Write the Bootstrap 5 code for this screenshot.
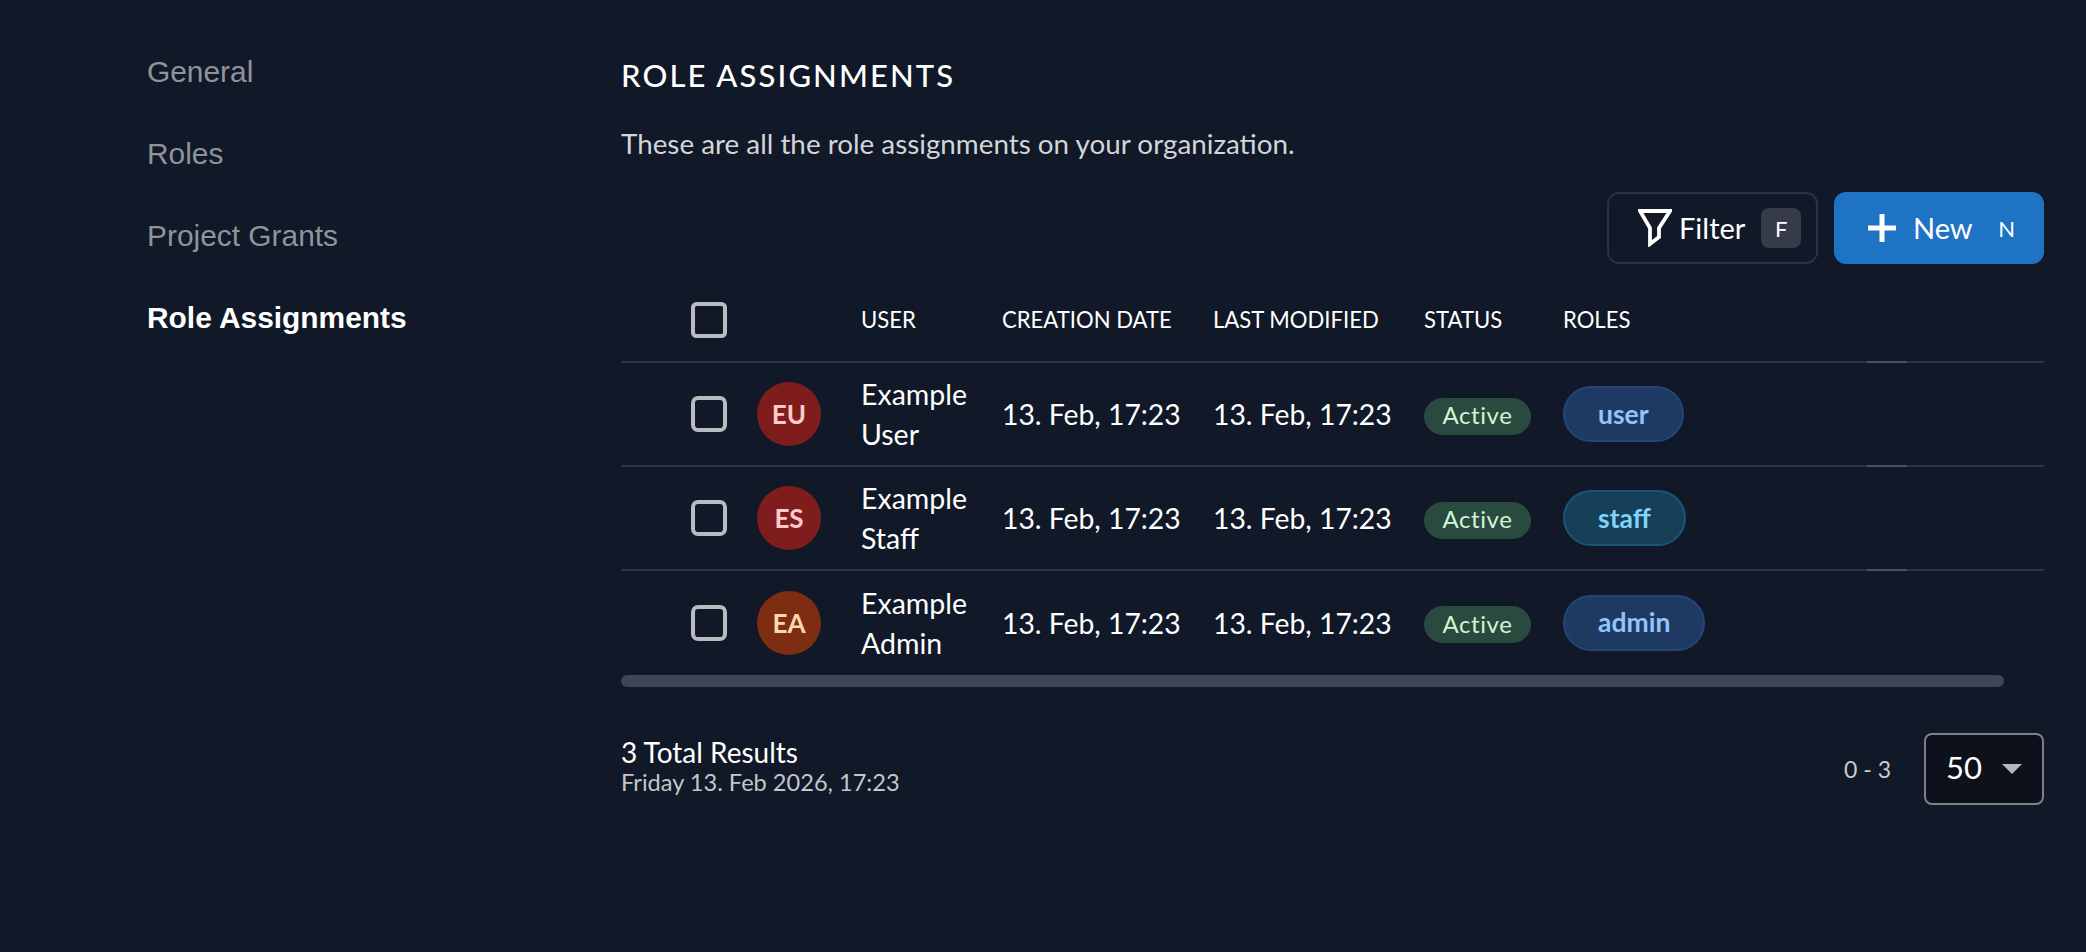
<!DOCTYPE html>
<html lang="en">
<head>
  <meta charset="UTF-8">
  <title>Role Assignments</title>
  <meta name="viewport" content="width=device-width, initial-scale=1">
  <link href="https://cdn.jsdelivr.net/npm/bootstrap@5.3.3/dist/css/bootstrap.min.css" rel="stylesheet">
  <style>
    body {
      background-color: #111827;
      color: #fff;
      font-family: Lato, "Liberation Sans", sans-serif;
    }
    .page-wrap {
      padding: 0 42px 0 147px;
      min-height: 952px;
    }
    .side-menu {
      width: 474px;
      flex: none;
      padding-top: 52px;
    }
    .side-menu .nav-link {
      font-family: "Liberation Sans", Arial, sans-serif;
      font-size: 29.9px;
      line-height: 40px;
      padding: 0;
      margin-bottom: 42px;
      color: #8f939b;
    }
    .side-menu .nav-link.active {
      color: #fff;
      font-weight: 700;
    }
    .main-area {
      flex: 1;
      min-width: 0;
      padding-top: 55px;
    }
    .page-title {
      font-family: Lato, sans-serif;
      font-size: 31px;
      line-height: 40px;
      font-weight: 500;
      letter-spacing: 2.1px;
      margin: 0 0 29px;
    }
    .page-desc {
      font-size: 27.8px;
      line-height: 40px;
      color: #d3d5d9;
      margin: 0 0 28px;
    }
    .tool-btn {
      height: 72px;
      border-radius: 12px;
      font-size: 29px;
      color: #fff;
      padding: 0;
    }
    .filter-btn {
      width: 211px;
      border: 2px solid #2b3140;
      padding-left: 29px;
    }
    .new-btn {
      width: 210px;
      background-color: #1f73c4;
      border: 0;
      padding-left: 33px;
    }
    .filter-btn:hover, .new-btn:hover {
      color: #fff;
    }
    .new-btn:hover {
      background-color: #1f73c4;
    }
    .filter-label {
      margin-left: 7px;
    }
    .key-box {
      width: 40px;
      height: 40px;
      border-radius: 8px;
      background-color: #363b49;
      font-size: 22px;
    }
    .key-plain {
      width: 40px;
      font-size: 22px;
      margin-left: 14px;
    }
    .roles-table {
      --bs-table-bg: transparent;
      --bs-table-color: #fff;
      table-layout: fixed;
      width: 100%;
      margin: 15px 0 0;
    }
    .roles-table th, .roles-table td {
      padding: 0;
      vertical-align: middle;
      border-bottom: 2px solid #2c3342;
    }
    .roles-table th {
      height: 83px;
      font-size: 22.1px;
      font-weight: 400;
      white-space: nowrap;
    }
    .roles-table td {
      height: 104px;
      font-size: 28.5px;
      line-height: 40px;
    }
    .roles-table td.date-cell {
      font-size: 28.3px;
      white-space: nowrap;
    }
    .roles-table tbody tr:last-child td {
      border-bottom: 0;
    }
    .roles-table .grip-cell {
      border-bottom-color: #4a4f5b;
    }
    .roles-table tbody tr:last-child .grip-cell {
      border-bottom: 0;
    }
    .row-check {
      width: 36px;
      height: 36px;
      margin: 0 0 0 70px;
      display: block;
      background-color: transparent;
      border: 4px solid #b9bbbf;
      border-radius: 4px;
    }
    .user-avatar {
      width: 64px;
      height: 64px;
      font-size: 26px;
      font-weight: 700;
    }
    .avatar-red {
      background-color: #7f1d1d;
      color: #fecaca;
    }
    .avatar-orange {
      background-color: #7c2d12;
      color: #fed7aa;
    }
    .state-pill {
      width: 107px;
      height: 37px;
      background-color: #2a4a40;
      color: #d1f5d3;
      font-size: 24px;
      font-weight: 400;
      letter-spacing: .6px;
      padding: 0 0 2px;
    }
    .role-pill {
      height: 56px;
      padding: 0 33px;
      border: 2px solid;
      font-size: 26.5px;
      font-weight: 700;
    }
    .role-blue {
      background-color: #1e3a63;
      border-color: #23457c;
      color: #93c5fd;
    }
    .role-sky {
      background-color: #164058;
      border-color: #1b5478;
      color: #7dd3fc;
    }
    .scroll-bar {
      width: 1383px;
      height: 12px;
      margin-top: 1px;
      border-radius: 6px;
      background-color: #3c4656;
    }
    .foot-row {
      margin-top: 46px;
    }
    .total-box {
      margin-bottom: 6px;
    }
    .total-line {
      font-size: 28px;
      line-height: 32px;
    }
    .date-line {
      font-size: 23.6px;
      line-height: 28px;
      color: #c3c6cb;
    }
    .range-text {
      font-size: 23px;
      color: #c9cbcf;
      margin-right: 33px;
    }
    .size-btn {
      width: 120px;
      height: 72px;
      padding: 0 0 4px 20px;
      background-color: #0d111b;
      border: 2px solid #7d8087;
      border-radius: 8px;
      color: #fff;
      font-size: 31px;
    }
    .size-btn:hover {
      background-color: #0d111b;
      color: #fff;
      border-color: #7d8087;
    }
    .size-btn::after {
      border-top: 10px solid #b5b7bb;
      border-left: 10px solid transparent;
      border-right: 10px solid transparent;
      border-bottom: 0;
      margin: 4px 0 0 20px;
      vertical-align: middle;
    }
  </style>
</head>
<body>

<div class="page-wrap d-flex">
  <nav class="side-menu nav flex-column">
    <a class="nav-link" href="#">General</a>
    <a class="nav-link" href="#">Roles</a>
    <a class="nav-link" href="#">Project Grants</a>
    <a class="nav-link active" href="#">Role Assignments</a>
  </nav>

  <main class="main-area">
    <h1 class="page-title">ROLE ASSIGNMENTS</h1>
    <p class="page-desc">These are all the role assignments on your organization.</p>

    <div class="d-flex justify-content-end gap-3">
      <button type="button" class="btn tool-btn filter-btn d-flex align-items-center">
        <svg width="34" height="38" viewBox="0 0 34 38" fill="none" stroke="#fff" stroke-width="3.8">
          <path d="M2 2h30L21 19v9l-9 7V19z"/>
        </svg>
        <span class="filter-label">Filter</span>
        <span class="key-box d-flex align-items-center justify-content-center ms-3">F</span>
      </button>
      <button type="button" class="btn tool-btn new-btn d-flex align-items-center">
        <svg width="30" height="30" viewBox="0 0 30 30" stroke="#fff" stroke-width="5">
          <path d="M15 1v28M1 15h28"/>
        </svg>
        <span class="ms-3">New</span>
        <span class="key-plain text-center">N</span>
      </button>
    </div>

    <table class="table roles-table">
      <colgroup>
        <col style="width:136px">
        <col style="width:104px">
        <col style="width:141px">
        <col style="width:211px">
        <col style="width:211px">
        <col style="width:139px">
        <col style="width:304px">
        <col style="width:40px">
        <col>
      </colgroup>
      <thead>
        <tr>
          <th><input class="form-check-input row-check" type="checkbox" aria-label="Select all"></th>
          <th></th>
          <th>USER</th>
          <th>CREATION DATE</th>
          <th>LAST MODIFIED</th>
          <th>STATUS</th>
          <th>ROLES</th>
          <th class="grip-cell"></th>
          <th></th>
        </tr>
      </thead>
      <tbody id="roleRows"></tbody>
    </table>

    <div class="scroll-bar"></div>

    <div class="foot-row d-flex justify-content-between align-items-center">
      <div class="total-box">
        <div class="total-line">3 Total Results</div>
        <div class="date-line">Friday 13. Feb 2026, 17:23</div>
      </div>
      <div class="d-flex align-items-center">
        <span class="range-text">0 - 3</span>
        <button type="button" class="btn size-btn dropdown-toggle d-flex align-items-center">50</button>
      </div>
    </div>
  </main>
</div>

<script src="https://cdn.jsdelivr.net/npm/bootstrap@5.3.3/dist/js/bootstrap.bundle.min.js"></script>
<script>
  const rows = [
    { first: 'Example', last: 'User', initials: 'EU', avatar: 'avatar-red', role: 'user', roleClass: 'role-blue' },
    { first: 'Example', last: 'Staff', initials: 'ES', avatar: 'avatar-red', role: 'staff', roleClass: 'role-sky' },
    { first: 'Example', last: 'Admin', initials: 'EA', avatar: 'avatar-orange', role: 'admin', roleClass: 'role-blue' }
  ];

  document.getElementById('roleRows').innerHTML = rows.map(r => `
    <tr>
      <td><input class="form-check-input row-check" type="checkbox" aria-label="Select ${r.last}"></td>
      <td><div class="user-avatar rounded-circle d-flex align-items-center justify-content-center ${r.avatar}">${r.initials}</div></td>
      <td>${r.first}<br>${r.last}</td>
      <td class="date-cell">13. Feb, 17:23</td>
      <td class="date-cell">13. Feb, 17:23</td>
      <td><span class="badge rounded-pill state-pill d-inline-flex align-items-center justify-content-center">Active</span></td>
      <td><span class="badge rounded-pill role-pill d-inline-flex align-items-center ${r.roleClass}">${r.role}</span></td>
      <td class="grip-cell"></td>
      <td></td>
    </tr>`).join('');
</script>

</body>
</html>
